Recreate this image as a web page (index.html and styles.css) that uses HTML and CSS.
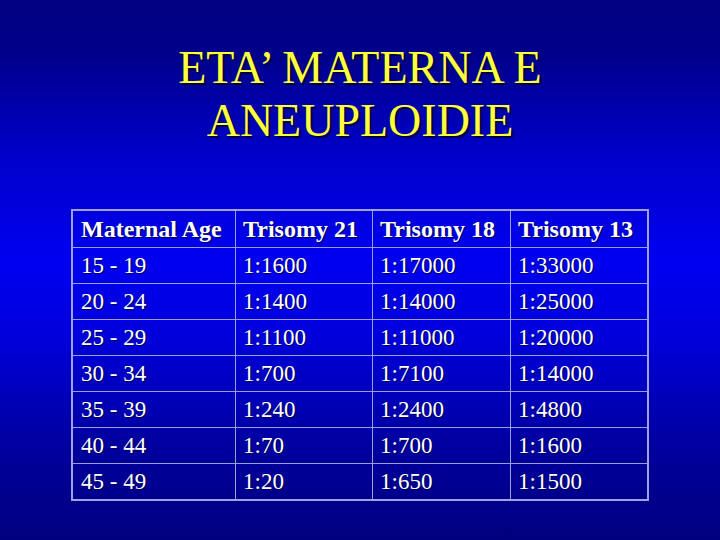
FILE: index.html
```html
<!DOCTYPE html>
<html lang="it">
<head>
<meta charset="utf-8">
<title>ETA’ MATERNA E ANEUPLOIDIE</title>
<link rel="stylesheet" href="styles.css">
</head>
<body>
<main class="slide">
  <h1 class="title">ETA’ MATERNA E<br>ANEUPLOIDIE</h1>
  <table class="data">
    <colgroup>
      <col class="c1"><col class="c2"><col class="c3"><col class="c4">
    </colgroup>
    <thead>
      <tr><th>Maternal Age</th><th>Trisomy 21</th><th>Trisomy 18</th><th>Trisomy 13</th></tr>
    </thead>
    <tbody>
      <tr><td>15 - 19</td><td>1:1600</td><td>1:17000</td><td>1:33000</td></tr>
      <tr><td>20 - 24</td><td>1:1400</td><td>1:14000</td><td>1:25000</td></tr>
      <tr><td>25 - 29</td><td>1:1100</td><td>1:11000</td><td>1:20000</td></tr>
      <tr><td>30 - 34</td><td>1:700</td><td>1:7100</td><td>1:14000</td></tr>
      <tr><td>35 - 39</td><td>1:240</td><td>1:2400</td><td>1:4800</td></tr>
      <tr><td>40 - 44</td><td>1:70</td><td>1:700</td><td>1:1600</td></tr>
      <tr><td>45 - 49</td><td>1:20</td><td>1:650</td><td>1:1500</td></tr>
    </tbody>
  </table>
</main>
</body>
</html>
```
FILE: styles.css
```css
html, body {
  margin: 0;
  padding: 0;
}
body {
  width: 720px;
  height: 540px;
  overflow: hidden;
  background: linear-gradient(to bottom,
    #000080 0%,
    #00008a 10%,
    #0000c8 28%,
    #0000f0 48%,
    #0000dc 62%,
    #0000a0 82%,
    #00007e 100%);
  font-family: "Liberation Serif", "Times New Roman", serif;
}
.slide {
  display: flex;
  flex-direction: column;
  align-items: center;
  padding-top: 41px;
}
.title {
  margin: 0;
  font-weight: normal;
  font-size: 46px;
  line-height: 53px;
  text-align: center;
  color: #ffff3c;
  text-shadow: 2px 2px 1px #000040;
}
.data {
  margin-top: 62px;
  border: 2px solid #a0a0e4;
  border-collapse: separate;
  border-spacing: 0;
  table-layout: fixed;
  color: #ffffff;
  font-size: 23px;
  text-shadow: 1px 1px 1px #000050;
}
.c1 { width: 162px; }
.c2 { width: 137px; }
.c3 { width: 138px; }
.c4 { width: 137px; }
.data th, .data td {
  height: 35px;
  padding: 0 0 0 7px;
  text-align: left;
  vertical-align: middle;
  line-height: 26px;
  white-space: nowrap;
  border-left: 1px solid #9c9ce0;
}
.data th {
  font-weight: bold;
  font-size: 24px;
  height: 36px;
}
.data td {
  border-top: 1px solid #9c9ce0;
}
.data th:first-child, .data td:first-child {
  border-left: none;
  padding-left: 8px;
}
```
